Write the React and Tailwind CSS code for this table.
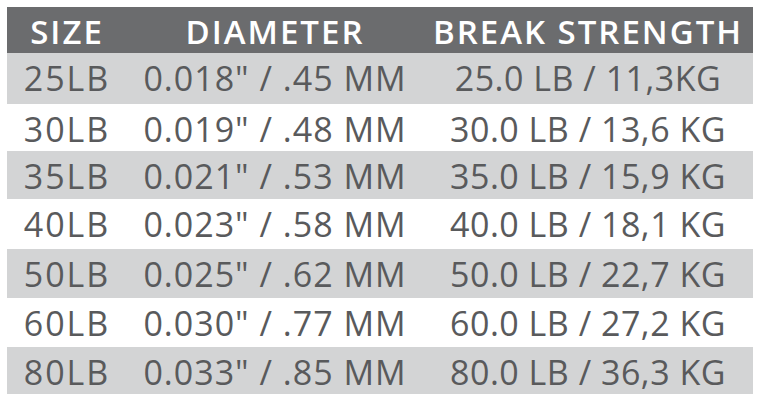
import React from 'react'

const rows = [
  { size: '25LB', dia: '0.018" / .45 MM', brk: '25.0 LB / 11,3KG', h: 'h-[51px]' },
  { size: '30LB', dia: '0.019" / .48 MM', brk: '30.0 LB / 13,6 KG', h: 'h-[47px]' },
  { size: '35LB', dia: '0.021" / .53 MM', brk: '35.0 LB / 15,9 KG', h: 'h-[48px]' },
  { size: '40LB', dia: '0.023" / .58 MM', brk: '40.0 LB / 18,1 KG', h: 'h-[50px]' },
  { size: '50LB', dia: '0.025" / .62 MM', brk: '50.0 LB / 22,7 KG', h: 'h-[49px]' },
  { size: '60LB', dia: '0.030" / .77 MM', brk: '60.0 LB / 27,2 KG', h: 'h-[49px]' },
  { size: '80LB', dia: '0.033" / .85 MM', brk: '80.0 LB / 36,3 KG', h: 'h-[47px]' },
]

export default function App() {
  return (
    <div className="w-[760px] h-[402px] bg-white pt-[7px] pl-[7px] font-['Open_Sans',sans-serif]">
      <div className="w-[746px]">
        <div className="grid grid-cols-[120px_296px_330px] h-[46px] items-center bg-[#6b6c6e] text-white text-[33px] font-semibold tracking-[2px]">
          <div className="text-center">SIZE</div>
          <div className="text-center">DIAMETER</div>
          <div className="text-center">BREAK STRENGTH</div>
        </div>
        {rows.map((row, i) => (
          <div
            key={row.size}
            className={
              'grid grid-cols-[120px_296px_330px] items-center text-[34px] tracking-[1px] text-[#595a5c] ' +
              row.h + ' ' +
              (i % 2 === 0 ? 'bg-[#d3d4d5]' : 'bg-white')
            }
          >
            <div className="text-center tracking-[2px]">{row.size}</div>
            <div className="text-center">{row.dia}</div>
            <div className="text-center tracking-[0.5px]">{row.brk}</div>
          </div>
        ))}
      </div>
    </div>
  )
}
